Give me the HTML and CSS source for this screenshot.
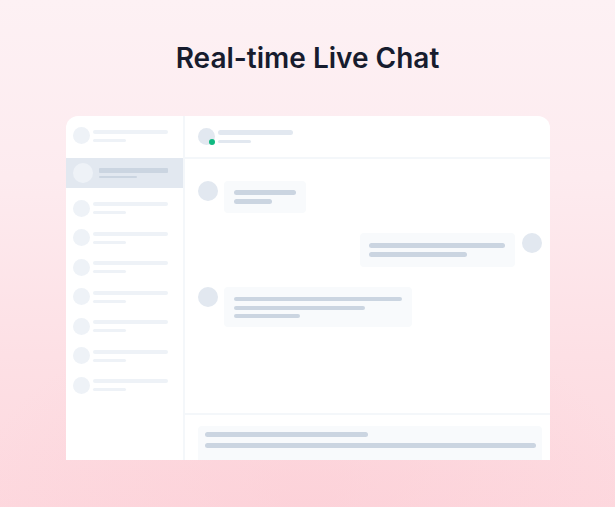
FILE: index.html
```html
<!DOCTYPE html>
<html lang="en">
<head>
<meta charset="utf-8">
<title>Real-time Live Chat</title>
<link rel="stylesheet" href="styles.css">
</head>
<body>
<div class="page">
  <h1 class="title">Real-time Live Chat</h1>
  <div class="card">
    <aside class="sidebar">
      <div class="row"><span class="av"></span><span class="lines"><i class="l1"></i><i class="l2"></i></span></div>
      <div class="row row-active"><span class="av"></span><span class="lines"><i class="l1"></i><i class="l2"></i></span></div>
      <div class="row"><span class="av"></span><span class="lines"><i class="l1"></i><i class="l2"></i></span></div>
      <div class="row"><span class="av"></span><span class="lines"><i class="l1"></i><i class="l2"></i></span></div>
      <div class="row"><span class="av"></span><span class="lines"><i class="l1"></i><i class="l2"></i></span></div>
      <div class="row"><span class="av"></span><span class="lines"><i class="l1"></i><i class="l2"></i></span></div>
      <div class="row"><span class="av"></span><span class="lines"><i class="l1"></i><i class="l2"></i></span></div>
      <div class="row"><span class="av"></span><span class="lines"><i class="l1"></i><i class="l2"></i></span></div>
      <div class="row"><span class="av"></span><span class="lines"><i class="l1"></i><i class="l2"></i></span></div>
    </aside>
    <section class="main">
      <header class="chat-head">
        <span class="head-av"><span class="online"></span></span>
        <span class="head-lines"><i class="h1"></i><i class="h2"></i></span>
      </header>
      <div class="messages">
        <div class="msg msg-in">
          <span class="msg-av"></span>
          <div class="bubble b1"><i class="bl bl-a"></i><i class="bl bl-b"></i></div>
        </div>
        <div class="msg msg-out">
          <div class="bubble b2"><i class="bl bl-c"></i><i class="bl bl-d"></i></div>
          <span class="msg-av"></span>
        </div>
        <div class="msg msg-in">
          <span class="msg-av"></span>
          <div class="bubble b3"><i class="bl bl-e"></i><i class="bl bl-f"></i><i class="bl bl-g"></i></div>
        </div>
      </div>
      <footer class="composer">
        <div class="input"><i class="il il-a"></i><i class="il il-b"></i></div>
      </footer>
    </section>
  </div>
</div>
</body>
</html>
```

FILE: styles.css
```css
* { box-sizing: border-box; }
html, body { margin: 0; padding: 0; }
body {
  width: 615px;
  height: 507px;
  overflow: hidden;
  font-family: Inter, "Noto Sans", "Liberation Sans", sans-serif;
  background:
    radial-gradient(ellipse 55% 40% at 50% 100%, rgba(252, 205, 213, 0.55), rgba(252, 205, 213, 0) 100%),
    linear-gradient(180deg, #fdf1f4 0%, #fdebef 35%, #fde0e5 70%, #fdd8de 100%);
}
.page {
  display: flex;
  flex-direction: column;
  align-items: center;
  height: 507px;
}
.title {
  margin: 42px 0 0;
  font-size: 28px;
  line-height: 32px;
  font-weight: 600;
  color: #171c2e;
  letter-spacing: 0;
}
.card {
  margin-top: 42px;
  width: 484px;
  height: 344px;
  background: #ffffff;
  border-radius: 12px 12px 0 0;
  overflow: hidden;
  display: flex;
}

/* Sidebar */
.sidebar {
  width: 119px;
  flex: none;
  border-right: 2px solid #f4f7fa;
  padding-top: 5px;
  display: flex;
  flex-direction: column;
}
.row {
  height: 29.5px;
  flex: none;
  display: flex;
  align-items: center;
  padding-left: 7px;
  gap: 3px;
}
.av {
  width: 17px;
  height: 17px;
  border-radius: 50%;
  background: #eef2f7;
  flex: none;
}
.lines { display: flex; flex-direction: column; }
.lines i { display: block; border-radius: 2px; background: #eef2f7; }
.l1 { width: 75px; height: 4px; }
.l2 { width: 33px; height: 3px; margin-top: 5px; }

.row-active {
  height: 30px;
  margin: 7px 0 6px;
  background: #e2e8f0;
  gap: 6px;
}
.row-active .av { width: 20px; height: 20px; background: #eef2f7; }
.row-active .l1 { width: 69px; height: 5px; background: #cbd5e1; border-radius: 1px; }
.row-active .l2 { width: 38px; height: 2px; margin-top: 3px; background: #cbd5e1; }

/* Main */
.main {
  flex: 1;
  display: flex;
  flex-direction: column;
}
.chat-head {
  height: 43px;
  flex: none;
  border-bottom: 2px solid #f4f7fa;
  padding: 12px 0 0 13px;
  display: flex;
  align-items: flex-start;
  gap: 3px;
}
.head-av {
  position: relative;
  width: 17px;
  height: 17px;
  border-radius: 50%;
  background: #e2e8f0;
  flex: none;
}
.online {
  position: absolute;
  left: 11px;
  top: 11px;
  width: 6px;
  height: 6px;
  border-radius: 50%;
  background: #10b981;
}
.head-lines { display: flex; flex-direction: column; padding-top: 2px; }
.head-lines i { display: block; background: #e2e8f0; border-radius: 3px; }
.h1 { width: 75px; height: 5px; }
.h2 { width: 33px; height: 3px; margin-top: 5px; }

.messages {
  flex: 1;
  padding: 22px 8px 0 13px;
  display: flex;
  flex-direction: column;
  gap: 20px;
}
.msg { display: flex; align-items: flex-start; }
.msg-in { gap: 6px; }
.msg-out { justify-content: flex-end; gap: 7px; }
.msg-av {
  width: 20px;
  height: 20px;
  border-radius: 50%;
  background: #e2e8f0;
  flex: none;
}
.bubble {
  background: #f8fafc;
  border-radius: 4px;
  display: flex;
  flex-direction: column;
}
.bl { display: block; background: #cbd5e1; border-radius: 3px; }
.b1 { width: 82px; padding: 9px 10px; }
.bl-a { width: 62px; height: 5px; }
.bl-b { width: 38px; height: 5px; margin-top: 4px; }
.b2 { width: 155px; padding: 10px 9px; }
.bl-c { width: 136px; height: 5px; }
.bl-d { width: 98px; height: 5px; margin-top: 4px; }
.b3 { width: 188px; padding: 10px 10px 9px; }
.bl-e { width: 168px; height: 4px; }
.bl-f { width: 131px; height: 4px; margin-top: 5px; }
.bl-g { width: 66px; height: 4px; margin-top: 4px; }

.composer {
  height: 47px;
  flex: none;
  border-top: 2px solid #f4f7fa;
  padding: 11px 8px 0 13px;
}
.input {
  height: 40px;
  background: #f8fafc;
  border-radius: 4px 4px 0 0;
  padding: 6px 6px 0 7px;
  display: flex;
  flex-direction: column;
}
.il { display: block; background: #cbd5e1; border-radius: 3px; height: 5px; }
.il-a { width: 163px; }
.il-b { width: 331px; margin-top: 6px; }
```
